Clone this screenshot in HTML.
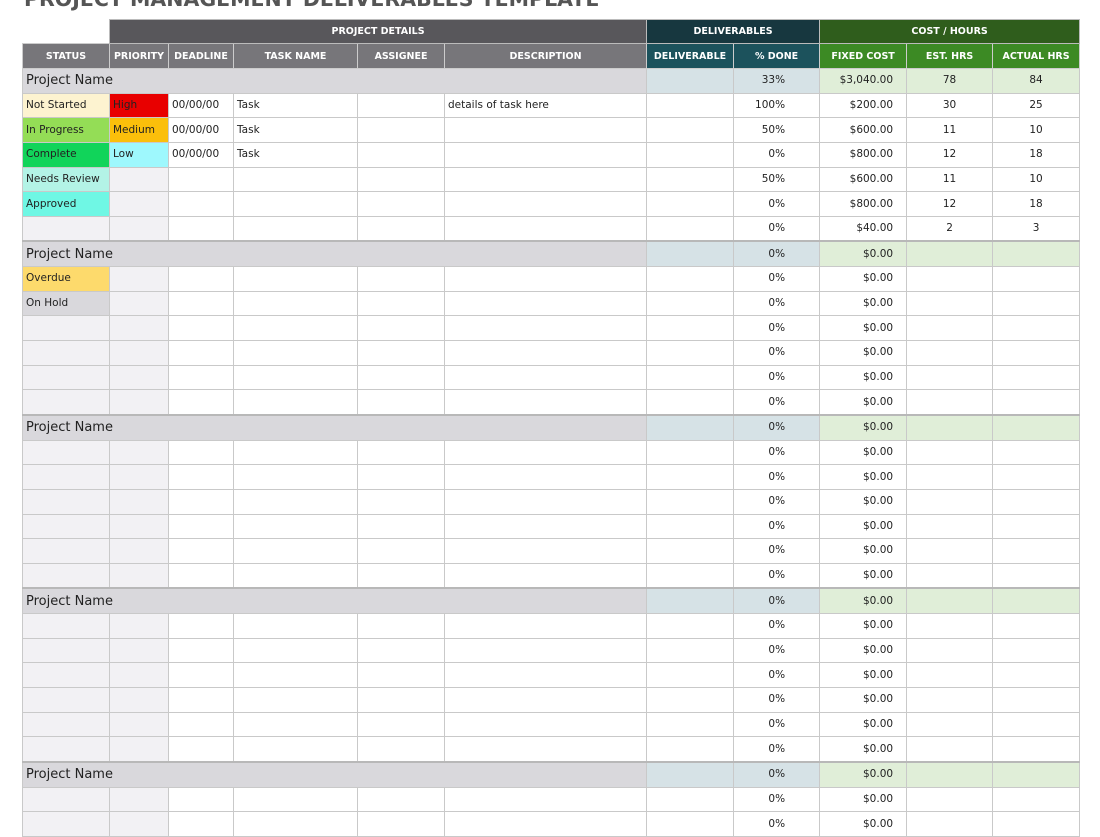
<!DOCTYPE html>
<html><head><meta charset="utf-8"><style>
body{margin:0;width:1100px;height:826px;overflow:hidden;background:#fff;font-family:"DejaVu Sans","Liberation Sans",sans-serif;position:relative}
.title{position:absolute;left:24px;top:-13px;font:bold 20.5px "DejaVu Sans",sans-serif;color:#555;white-space:nowrap}
table{position:absolute;left:22px;top:19px;border-collapse:collapse;table-layout:fixed;width:1058px}
td{border:1px solid #c9c9c9;padding:0 3px;font-size:10.5px;color:#222;white-space:nowrap;overflow:hidden;height:23.65px;line-height:23px}
tr.h1 td{height:23px;color:#fff;font:bold 9.5px "DejaVu Sans",sans-serif;text-align:center;border-color:#bbb}
tr.h2 td{height:24px;color:#fff;font:bold 9.5px "DejaVu Sans",sans-serif;text-align:center;border-color:#ccc}
tr.p td{background:#d9d8dc;border-top:2px solid #b8b8b8}
tr.p td.n{font-size:13px}
tr.p td.d{background:#d6e2e6}
tr.p td.g{background:#e0eed8}
.r{text-align:right;padding-right:34px}
.c{text-align:right;padding-right:13px}
.m{text-align:center}
.lg{background:#f2f1f4}
</style></head><body>
<div class="title">PROJECT MANAGEMENT DELIVERABLES TEMPLATE</div>
<table>
<colgroup><col style="width:87px"><col style="width:59px"><col style="width:65px"><col style="width:124px"><col style="width:87px"><col style="width:202px"><col style="width:87px"><col style="width:86px"><col style="width:87px"><col style="width:86px"><col style="width:87px"></colgroup>
<tr class="h1"><td style="border:none;background:#fff"></td><td colspan="5" style="background:#58575b">PROJECT DETAILS</td><td colspan="2" style="background:#17373f">DELIVERABLES</td><td colspan="3" style="background:#2f5d1c">COST / HOURS</td></tr>
<tr class="h2"><td style="background:#77767a">STATUS</td><td style="background:#77767a">PRIORITY</td><td style="background:#77767a">DEADLINE</td><td style="background:#77767a">TASK NAME</td><td style="background:#77767a">ASSIGNEE</td><td style="background:#77767a">DESCRIPTION</td><td style="background:#1c525c">DELIVERABLE</td><td style="background:#1c525c">% DONE</td><td style="background:#3c8a24">FIXED COST</td><td style="background:#3c8a24">EST. HRS</td><td style="background:#3c8a24">ACTUAL HRS</td></tr>
<tr class="p"><td colspan="6" class="n" style="border-top:1px solid #c9c9c9">Project Name</td><td class="d" style="border-top:1px solid #c9c9c9"></td><td class="d r" style="border-top:1px solid #c9c9c9">33%</td><td class="g c" style="border-top:1px solid #c9c9c9">$3,040.00</td><td class="g m" style="border-top:1px solid #c9c9c9">78</td><td class="g m" style="border-top:1px solid #c9c9c9">84</td></tr>
<tr><td style="background:#fdf3d0">Not Started</td><td style="background:#e80000">High</td><td>00/00/00</td><td>Task</td><td></td><td>details of task here</td><td></td><td class="r">100%</td><td class="c">$200.00</td><td class="m">30</td><td class="m">25</td></tr>
<tr><td style="background:#94dd56">In Progress</td><td style="background:#fbbf0b">Medium</td><td>00/00/00</td><td>Task</td><td></td><td></td><td></td><td class="r">50%</td><td class="c">$600.00</td><td class="m">11</td><td class="m">10</td></tr>
<tr><td style="background:#11d45a">Complete</td><td style="background:#9ef8fd">Low</td><td>00/00/00</td><td>Task</td><td></td><td></td><td></td><td class="r">0%</td><td class="c">$800.00</td><td class="m">12</td><td class="m">18</td></tr>
<tr><td style="background:#b3f3e6">Needs Review</td><td class="lg"></td><td></td><td></td><td></td><td></td><td></td><td class="r">50%</td><td class="c">$600.00</td><td class="m">11</td><td class="m">10</td></tr>
<tr><td style="background:#6ff7e4">Approved</td><td class="lg"></td><td></td><td></td><td></td><td></td><td></td><td class="r">0%</td><td class="c">$800.00</td><td class="m">12</td><td class="m">18</td></tr>
<tr><td class="lg"></td><td class="lg"></td><td></td><td></td><td></td><td></td><td></td><td class="r">0%</td><td class="c">$40.00</td><td class="m">2</td><td class="m">3</td></tr>
<tr class="p"><td colspan="6" class="n">Project Name</td><td class="d"></td><td class="d r">0%</td><td class="g c">$0.00</td><td class="g"></td><td class="g"></td></tr>
<tr><td style="background:#fdda6c">Overdue</td><td class="lg"></td><td></td><td></td><td></td><td></td><td></td><td class="r">0%</td><td class="c">$0.00</td><td></td><td></td></tr>
<tr><td style="background:#d9d8dc">On Hold</td><td class="lg"></td><td></td><td></td><td></td><td></td><td></td><td class="r">0%</td><td class="c">$0.00</td><td></td><td></td></tr>
<tr><td class="lg"></td><td class="lg"></td><td></td><td></td><td></td><td></td><td></td><td class="r">0%</td><td class="c">$0.00</td><td></td><td></td></tr>
<tr><td class="lg"></td><td class="lg"></td><td></td><td></td><td></td><td></td><td></td><td class="r">0%</td><td class="c">$0.00</td><td></td><td></td></tr>
<tr><td class="lg"></td><td class="lg"></td><td></td><td></td><td></td><td></td><td></td><td class="r">0%</td><td class="c">$0.00</td><td></td><td></td></tr>
<tr><td class="lg"></td><td class="lg"></td><td></td><td></td><td></td><td></td><td></td><td class="r">0%</td><td class="c">$0.00</td><td></td><td></td></tr>
<tr class="p"><td colspan="6" class="n">Project Name</td><td class="d"></td><td class="d r">0%</td><td class="g c">$0.00</td><td class="g"></td><td class="g"></td></tr>
<tr><td class="lg"></td><td class="lg"></td><td></td><td></td><td></td><td></td><td></td><td class="r">0%</td><td class="c">$0.00</td><td></td><td></td></tr>
<tr><td class="lg"></td><td class="lg"></td><td></td><td></td><td></td><td></td><td></td><td class="r">0%</td><td class="c">$0.00</td><td></td><td></td></tr>
<tr><td class="lg"></td><td class="lg"></td><td></td><td></td><td></td><td></td><td></td><td class="r">0%</td><td class="c">$0.00</td><td></td><td></td></tr>
<tr><td class="lg"></td><td class="lg"></td><td></td><td></td><td></td><td></td><td></td><td class="r">0%</td><td class="c">$0.00</td><td></td><td></td></tr>
<tr><td class="lg"></td><td class="lg"></td><td></td><td></td><td></td><td></td><td></td><td class="r">0%</td><td class="c">$0.00</td><td></td><td></td></tr>
<tr><td class="lg"></td><td class="lg"></td><td></td><td></td><td></td><td></td><td></td><td class="r">0%</td><td class="c">$0.00</td><td></td><td></td></tr>
<tr class="p"><td colspan="6" class="n">Project Name</td><td class="d"></td><td class="d r">0%</td><td class="g c">$0.00</td><td class="g"></td><td class="g"></td></tr>
<tr><td class="lg"></td><td class="lg"></td><td></td><td></td><td></td><td></td><td></td><td class="r">0%</td><td class="c">$0.00</td><td></td><td></td></tr>
<tr><td class="lg"></td><td class="lg"></td><td></td><td></td><td></td><td></td><td></td><td class="r">0%</td><td class="c">$0.00</td><td></td><td></td></tr>
<tr><td class="lg"></td><td class="lg"></td><td></td><td></td><td></td><td></td><td></td><td class="r">0%</td><td class="c">$0.00</td><td></td><td></td></tr>
<tr><td class="lg"></td><td class="lg"></td><td></td><td></td><td></td><td></td><td></td><td class="r">0%</td><td class="c">$0.00</td><td></td><td></td></tr>
<tr><td class="lg"></td><td class="lg"></td><td></td><td></td><td></td><td></td><td></td><td class="r">0%</td><td class="c">$0.00</td><td></td><td></td></tr>
<tr><td class="lg"></td><td class="lg"></td><td></td><td></td><td></td><td></td><td></td><td class="r">0%</td><td class="c">$0.00</td><td></td><td></td></tr>
<tr class="p"><td colspan="6" class="n">Project Name</td><td class="d"></td><td class="d r">0%</td><td class="g c">$0.00</td><td class="g"></td><td class="g"></td></tr>
<tr><td class="lg"></td><td class="lg"></td><td></td><td></td><td></td><td></td><td></td><td class="r">0%</td><td class="c">$0.00</td><td></td><td></td></tr>
<tr><td class="lg"></td><td class="lg"></td><td></td><td></td><td></td><td></td><td></td><td class="r">0%</td><td class="c">$0.00</td><td></td><td></td></tr>
</table>
</body></html>
